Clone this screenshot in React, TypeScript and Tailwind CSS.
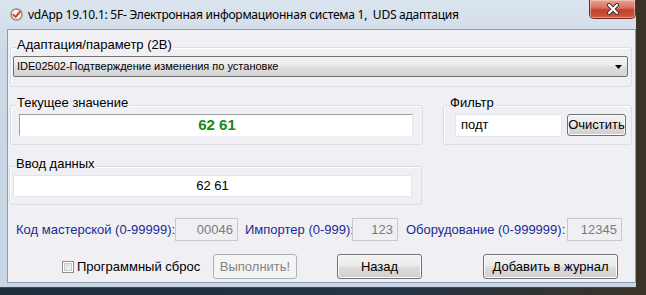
import React from "react";

function Group({ label, className, children }: { label: string; className: string; children: React.ReactNode }) {
  return (
    <div className={"relative border border-[#d5dfe5] rounded-[3px] shadow-[inset_1px_1px_0_#ffffff] " + className}>
      <span className="absolute left-[5px] top-[-11px] px-[1px] bg-[#f0f0f4] text-[13px] leading-[15px] text-black whitespace-nowrap">
        {label}
      </span>
      {children}
    </div>
  );
}

function Btn({ children, className }: { children: React.ReactNode; className: string }) {
  return (
    <div
      className={
        "flex items-center justify-center border border-[#707070] rounded-[3px] bg-[linear-gradient(#f2f2f2,#ebebeb_48%,#dddddd_52%,#cfcfcf)] shadow-[inset_0_0_0_1px_#fcfcfc] text-[13px] text-black whitespace-nowrap " +
        className
      }
    >
      {children}
    </div>
  );
}

function NumBox({ value, className }: { value: string; className: string }) {
  return (
    <div className={"h-[23px] border border-[#c9c9c9] bg-[#f0f0f4] flex items-center justify-end pr-[4px] text-[13px] text-[#7a7a7a] " + className}>
      {value}
    </div>
  );
}

export default function App() {
  return (
    <div className="w-[646px] h-[295px] bg-[linear-gradient(90deg,#1f2d3d,#243446_60%,#3a3226)] overflow-hidden font-['Liberation_Sans',Arial,sans-serif]">
      <div className="relative w-[636px] h-[288px] flex flex-col bg-[linear-gradient(180deg,#dbe5ef,#cbd8e6_20%,#c7d5e4)] rounded-tr-[5px] border-b border-[#3a4a5c]">
        {/* title bar */}
        <div className="h-[29px] flex items-start">
          <div className="h-[29px] flex items-center pl-[9px]">
            <svg width="15" height="15" viewBox="0 0 15 15">
              <circle cx="7.5" cy="7.5" r="5.5" fill="#f4f4f4" stroke="#8a8a8a" strokeWidth="1.4" />
              <path d="M4.2 7.6 L6.6 10 L11 4.6" fill="none" stroke="#d8452b" strokeWidth="2" strokeLinecap="round" strokeLinejoin="round" />
            </svg>
            <span className="ml-[4px] text-[12px] leading-[16px] text-black whitespace-pre font-['Noto_Sans',sans-serif] tracking-[-0.25px]">
              vdApp 19.10.1: 5F- Электронная информационная система 1,  UDS адаптация
            </span>
          </div>
          <div className="ml-auto w-[47px] h-[19px] rounded-b-[5px] border border-t-0 border-[#6b2a20] bg-[linear-gradient(#e9a395,#d8705c_45%,#c2412a_55%,#d2583f)] flex items-center justify-center shadow-[inset_0_0_0_1px_rgba(255,220,210,0.5)]">
            <svg width="14" height="12" viewBox="0 0 14 12">
              <path d="M3 2 L11 10 M11 2 L3 10" stroke="#4a2a25" strokeWidth="4" strokeLinecap="round" />
              <path d="M3 2 L11 10 M11 2 L3 10" stroke="#ffffff" strokeWidth="2.2" strokeLinecap="round" />
            </svg>
          </div>
        </div>

        {/* client */}
        <div className="ml-[7px] w-[629px] h-[254px] border border-[#8c9bb0] bg-[#f0f0f4] flex flex-col">
          {/* group 1 */}
          <Group label="Адаптация/параметр (2B)" className="mt-[17px] ml-[2px] mr-[3px] h-[40px] flex flex-col">
            <div className="mt-[8px] ml-[2px] mr-[3px] h-[21px] border border-[#707070] rounded-[2px] bg-[linear-gradient(#f3f3f3,#ebebeb_45%,#dedede_55%,#d3d3d3)] flex items-center pl-[3px] pr-[5px]">
              <span className="text-[11px] text-black whitespace-nowrap">IDE02502-Подтверждение изменения по установке</span>
              <svg className="ml-auto" width="7" height="4" viewBox="0 0 7 4">
                <path d="M0 0 L7 0 L3.5 4 Z" fill="#000" />
              </svg>
            </div>
          </Group>

          {/* group 2 row */}
          <div className="mt-[18px] flex">
            <Group label="Текущее значение" className="ml-[2px] w-[413px] h-[40px] flex flex-col">
              <div className="mt-[8px] ml-[8px] w-[394px] h-[22px] bg-white border border-t-[#a0a0a0] border-l-[#a0a0a0] border-r-[#e6e6e6] border-b-[#ffffff] flex items-center justify-center">
                <span className="text-[15px] font-bold text-[#178a17] pl-[2px]">62 61</span>
              </div>
            </Group>
            <Group label="Фильтр" className="ml-[20px] w-[189px] h-[40px] flex items-center">
              <div className="ml-[11px] w-[107px] h-[23px] bg-white border border-[#e2e6ea] flex items-center pl-[5px] text-[13px] text-black">
                подт
              </div>
              <Btn className="ml-[5px] w-[59px] h-[22px]">Очистить</Btn>
            </Group>
          </div>

          {/* group 3 */}
          <Group label="Ввод данных" className="mt-[21px] ml-[1px] w-[413px] h-[39px] flex flex-col">
            <div className="mt-[8px] ml-[3px] w-[399px] h-[22px] bg-white border border-[#e2e6ea] flex items-center justify-center text-[13px] text-black">
              62 61
            </div>
          </Group>

          {/* row 4 */}
          <div className="mt-[13px] h-[23px] flex items-center text-[13px] text-[#1b2a94] whitespace-nowrap">
            <span className="ml-[8px] w-[159px]">Код мастерской (0-99999):</span>
            <NumBox value="00046" className="w-[63px]" />
            <span className="ml-[7px] w-[107px]">Импортер (0-999):</span>
            <NumBox value="123" className="w-[46px]" />
            <span className="ml-[8px] w-[161px]">Оборудование (0-999999):</span>
            <NumBox value="12345" className="w-[55px]" />
          </div>

          {/* row 5 */}
          <div className="mt-[13px] h-[25px] flex items-center">
            <div className="ml-[54px] w-[151px] flex items-center">
              <div className="w-[12px] h-[12px] border border-[#8e8f8f] bg-white p-[1px]">
                <div className="w-full h-full bg-[linear-gradient(135deg,#dcdcdc,#f6f6f6)] border border-[#c8c8c8]" />
              </div>
              <span className="ml-[3px] text-[13px] text-black whitespace-nowrap">Программный сброс</span>
            </div>
            <div className="w-[84px] h-[25px] border border-[#adb2b5] rounded-[3px] bg-[#f4f4f4] flex items-center justify-center text-[13px] text-[#838383]">
              Выполнить!
            </div>
            <Btn className="ml-[40px] w-[85px] h-[25px]">Назад</Btn>
            <Btn className="ml-[61px] w-[135px] h-[25px]">Добавить в журнал</Btn>
          </div>
        </div>
      </div>
    </div>
  );
}
